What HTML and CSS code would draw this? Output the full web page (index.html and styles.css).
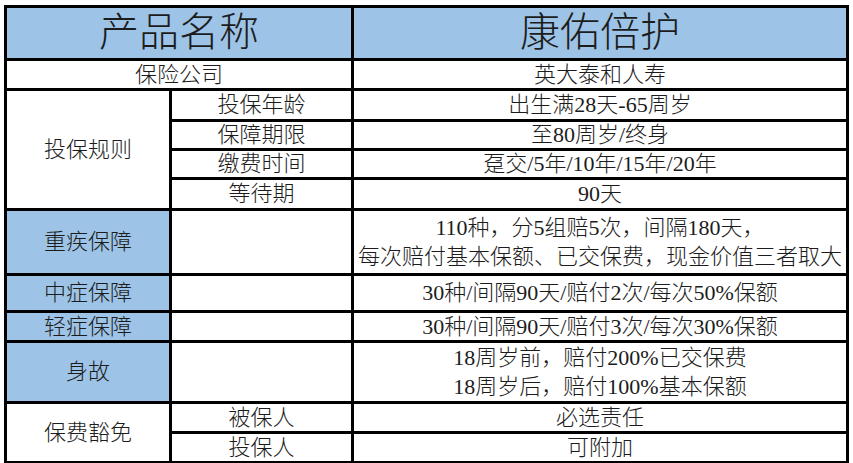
FILE: index.html
```html
<!DOCTYPE html>
<html lang="zh-CN">
<head>
<meta charset="utf-8">
<title>康佑倍护</title>
<link rel="stylesheet" href="styles.css">
</head>
<body>
<table class="sheet">
  <colgroup>
    <col class="c1"><col class="c2"><col class="c3">
  </colgroup>
  <tr class="r-head">
    <td class="blue title" colspan="2">产品名称</td>
    <td class="blue title">康佑倍护</td>
  </tr>
  <tr class="r30">
    <td colspan="2">保险公司</td>
    <td>英大泰和人寿</td>
  </tr>
  <tr class="r31">
    <td rowspan="4">投保规则</td>
    <td>投保年龄</td>
    <td>出生满28天-65周岁</td>
  </tr>
  <tr class="r29">
    <td>保障期限</td>
    <td>至80周岁/终身</td>
  </tr>
  <tr class="r29">
    <td>缴费时间</td>
    <td>趸交/5年/10年/15年/20年</td>
  </tr>
  <tr class="r31">
    <td>等待期</td>
    <td>90天</td>
  </tr>
  <tr class="r65">
    <td class="blue">重疾保障</td>
    <td></td>
    <td class="multi">110种，分5组赔5次，间隔180天，<br>每次赔付基本保额、已交保费，现金价值三者取大</td>
  </tr>
  <tr class="r37">
    <td class="blue">中症保障</td>
    <td></td>
    <td>30种/间隔90天/赔付2次/每次50%保额</td>
  </tr>
  <tr class="r30">
    <td class="blue">轻症保障</td>
    <td></td>
    <td>30种/间隔90天/赔付3次/每次30%保额</td>
  </tr>
  <tr class="r58">
    <td class="blue">身故</td>
    <td></td>
    <td class="multi">18周岁前，赔付200%已交保费<br>18周岁后，赔付100%基本保额</td>
  </tr>
  <tr class="r30">
    <td rowspan="2">保费豁免</td>
    <td>被保人</td>
    <td>必选责任</td>
  </tr>
  <tr class="r30">
    <td>投保人</td>
    <td>可附加</td>
  </tr>
</table>
</body>
</html>
```
FILE: styles.css
```css
html, body {
  margin: 0;
  padding: 0;
  background: #ffffff;
}
body {
  padding: 5px 0 0 4px;
  font-family: "Liberation Serif", "Noto Sans CJK SC", serif;
  font-weight: 300;
  color: #1c1c1c;
}
.sheet {
  border-collapse: collapse;
  table-layout: fixed;
  width: 845px;
}
.c1 { width: 165px; }
.c2 { width: 182px; }
.c3 { width: 495px; }
.sheet td {
  border: 3px solid #000;
  padding: 0;
  text-align: center;
  vertical-align: middle;
  font-size: 22px;
  line-height: 24px;
  white-space: nowrap;
  overflow: hidden;
}
.blue {
  background: #9dc3e6;
}
.sheet td.title {
  font-size: 40px;
  line-height: 46px;
}
.sheet td.multi {
  line-height: 29px;
}
.r-head { height: 53px; }
.r29 { height: 29px; }
.r30 { height: 30px; }
.r31 { height: 31px; }
.r37 { height: 37px; }
.r58 { height: 58px; }
.r65 { height: 65px; }
```
